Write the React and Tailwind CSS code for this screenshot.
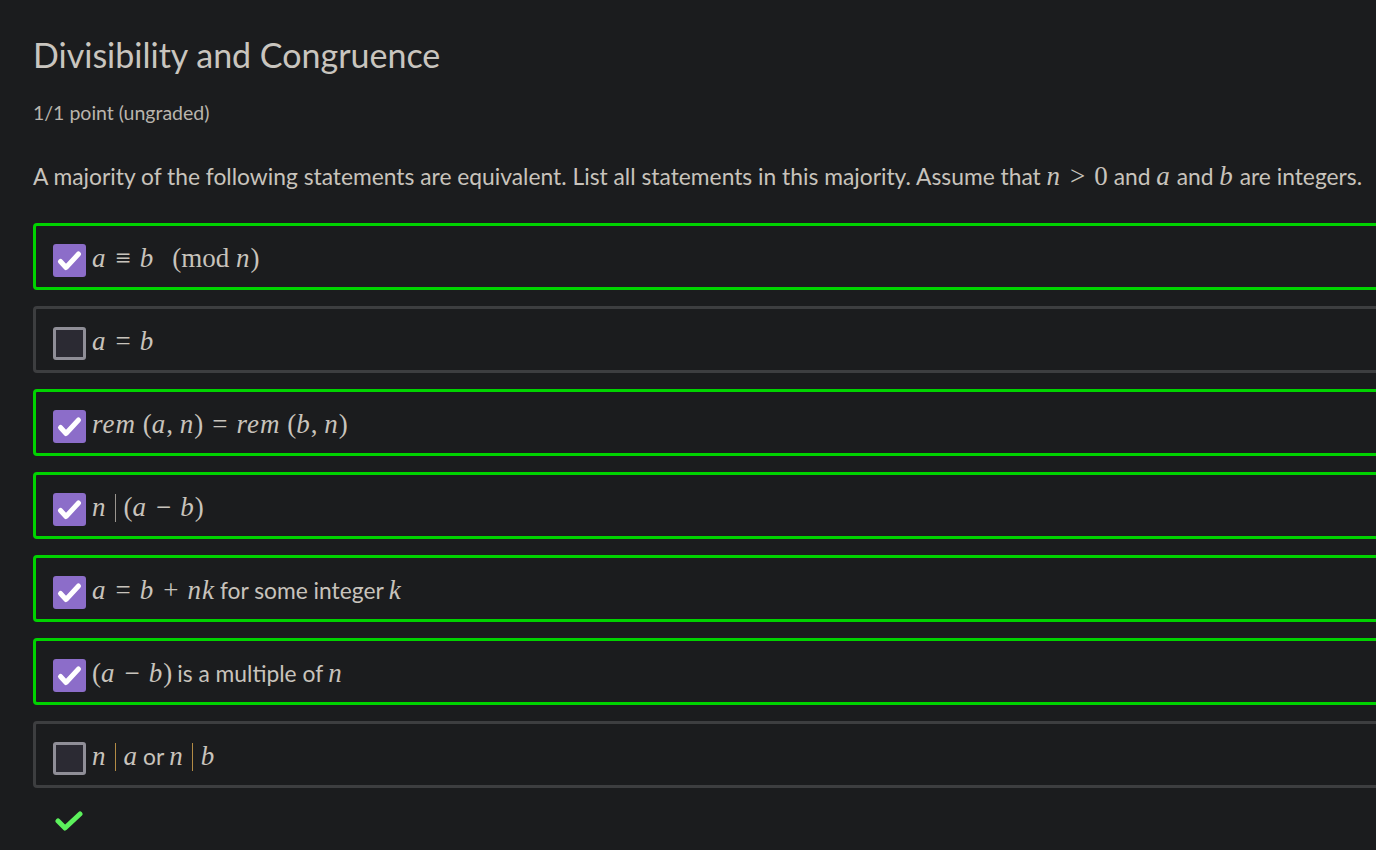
import React from "react";

const sans = { fontFamily: "Lato, 'Noto Sans', sans-serif" };
const serif = { fontFamily: "'Liberation Serif', serif" };

const V = ({ children }) => (
  <span className="italic tracking-[1px]" style={serif}>
    {children}
  </span>
);

const Op = ({ children }) => (
  <span className="mx-[9px]" style={serif}>
    {children}
  </span>
);

const R = ({ children }) => <span style={serif}>{children}</span>;

const Txt = ({ children }) => (
  <span className="text-[22.8px] mx-[5px]" style={sans}>
    {children}
  </span>
);

const Bar = ({ gold }) => (
  <span
    className={`inline-block w-[1px] h-[28px] mx-[8px] align-[-6px] ${
      gold ? "bg-[#b38b45]" : "bg-[#9a958f]"
    }`}
  />
);

const options = [
  {
    checked: true,
    label: (
      <>
        <V>a</V>
        <Op>≡</Op>
        <V>b</V>
        <span className="ml-[18px]">
          <R>(mod </R>
          <V>n</V>
          <R>)</R>
        </span>
      </>
    ),
  },
  {
    checked: false,
    label: (
      <>
        <V>a</V>
        <Op>=</Op>
        <V>b</V>
      </>
    ),
  },
  {
    checked: true,
    label: (
      <>
        <V>rem</V>
        <R> (</R>
        <V>a</V>
        <R>, </R>
        <V>n</V>
        <R>)</R>
        <Op>=</Op>
        <V>rem</V>
        <R> (</R>
        <V>b</V>
        <R>, </R>
        <V>n</V>
        <R>)</R>
      </>
    ),
  },
  {
    checked: true,
    label: (
      <>
        <V>n</V>
        <Bar />
        <R>(</R>
        <V>a</V>
        <Op>−</Op>
        <V>b</V>
        <R>)</R>
      </>
    ),
  },
  {
    checked: true,
    label: (
      <>
        <V>a</V>
        <Op>=</Op>
        <V>b</V>
        <Op>+</Op>
        <V>nk</V>
        <Txt>for some integer</Txt>
        <V>k</V>
      </>
    ),
  },
  {
    checked: true,
    label: (
      <>
        <R>(</R>
        <V>a</V>
        <Op>−</Op>
        <V>b</V>
        <R>)</R>
        <Txt>is a multiple of</Txt>
        <V>n</V>
      </>
    ),
  },
  {
    checked: false,
    label: (
      <>
        <V>n</V>
        <Bar gold />
        <V>a</V>
        <Txt>or</Txt>
        <V>n</V>
        <Bar gold />
        <V>b</V>
      </>
    ),
  },
];

const Checkbox = ({ checked }) =>
  checked ? (
    <div className="w-[33px] h-[33px] shrink-0 rounded-[3px] bg-[#8c6dc9]">
      <svg width="33" height="33" viewBox="0 0 33 33">
        <polyline
          points="7.5,17.5 13,23.5 25.5,10"
          fill="none"
          stroke="#ffffff"
          strokeWidth="5"
          strokeLinecap="round"
          strokeLinejoin="round"
        />
      </svg>
    </div>
  ) : (
    <div className="w-[33px] h-[33px] shrink-0 rounded-[3px] bg-[#2b2a33] border-[3px] border-[#8f8e97]" />
  );

export default function App() {
  return (
    <div className="bg-[#1b1c1e] min-h-[850px] overflow-hidden pl-[33px] pt-[34px] text-[#c8c3bc]">
      <h2 className="text-[34px] leading-[42px] text-[#c9c5bf]" style={sans}>
        Divisibility and Congruence
      </h2>
      <p className="mt-[25px] text-[19.5px] leading-[24px] text-[#b9b4ad]" style={sans}>
        1/1 point (ungraded)
      </p>
      <p className="mt-[36px] text-[22.8px] leading-[28px] whitespace-nowrap" style={sans}>
        A majority of the following statements are equivalent. List all statements in this majority. Assume that{" "}
        <span className="text-[27px]">
          <V>n</V>
          <Op>&gt;</Op>
          <R>0</R>
        </span>{" "}
        and <span className="text-[27px]"><V>a</V></span> and{" "}
        <span className="text-[27px]"><V>b</V></span> are integers.
      </p>

      <div className="mt-[33px] flex flex-col gap-[16px]">
        {options.map((opt, i) => (
          <div
            key={i}
            className={`w-[1380px] shrink-0 h-[67px] rounded-[4px] border-[3px] flex items-center pl-[17px] pt-[8px] ${
              opt.checked ? "border-[#00d300]" : "border-[#3d3e40]"
            }`}
          >
            <Checkbox checked={opt.checked} />
            <div className="ml-[6px] text-[27px] leading-[30px] whitespace-nowrap text-[#c8c3bc] -mt-[6px]">
              {opt.label}
            </div>
          </div>
        ))}
      </div>

      <div className="mt-[22px] ml-[22px]">
        <svg width="28" height="22" viewBox="0 0 28 22">
          <polyline
            points="3,11 10,18 25,4"
            fill="none"
            stroke="#5cf15c"
            strokeWidth="5"
            strokeLinecap="round"
            strokeLinejoin="round"
          />
        </svg>
      </div>
    </div>
  );
}
